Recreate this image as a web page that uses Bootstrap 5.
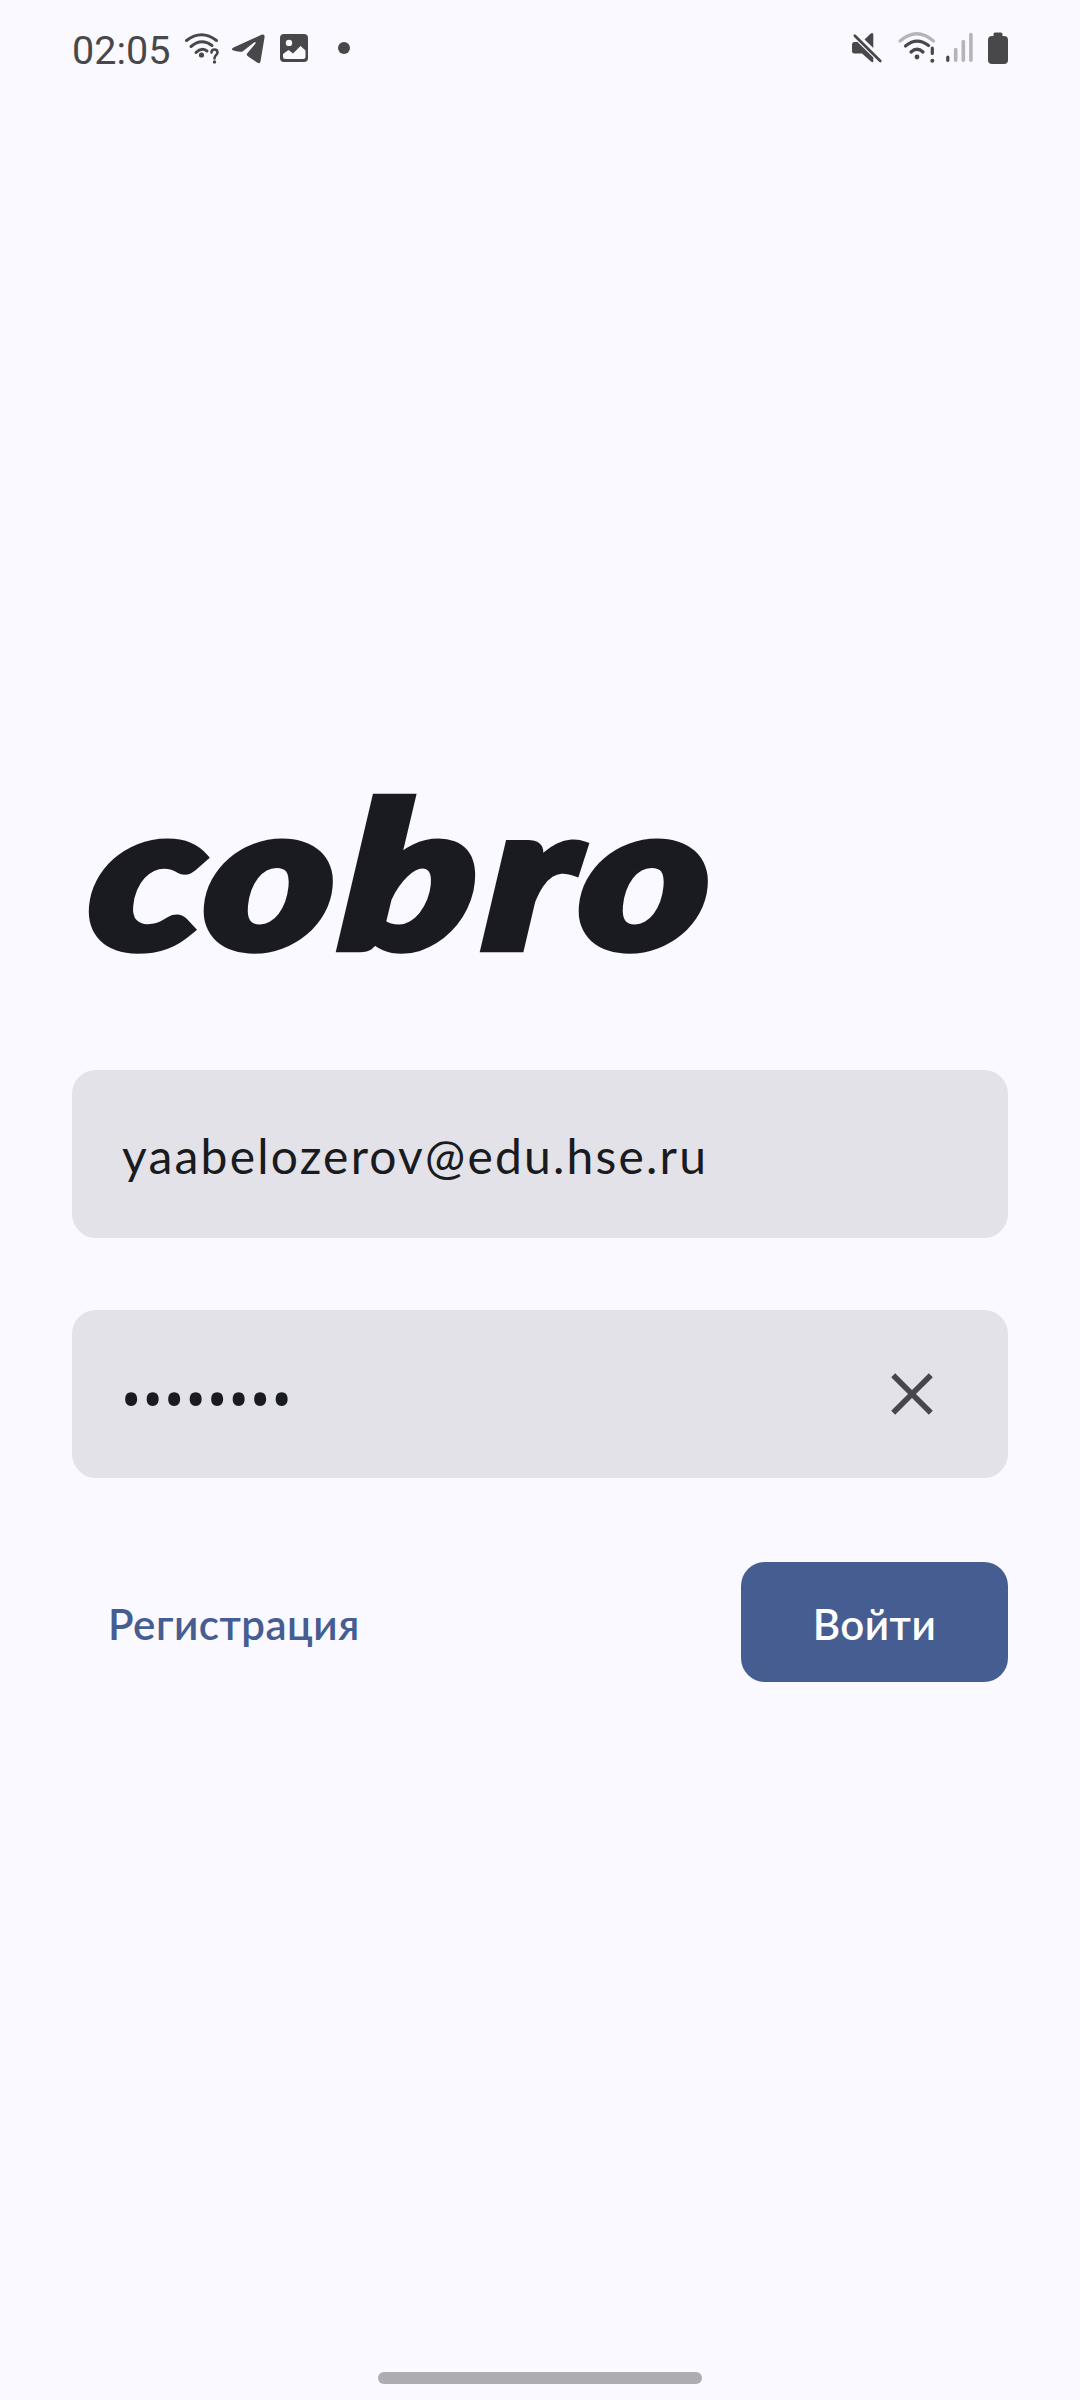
<!DOCTYPE html>
<html lang="ru">
<head>
<meta charset="utf-8">
<meta name="viewport" content="width=device-width, initial-scale=1">
<title>cobro</title>
<link href="https://cdn.jsdelivr.net/npm/bootstrap@5.3.0/dist/css/bootstrap.min.css" rel="stylesheet">
<style>
  body { background: #faf9ff; color: #1a1b20; font-family: "Noto Sans", sans-serif; height: 2400px; overflow: hidden; }
  .status-bar { height: 100px; padding: 0 72px; color: #48484b; }
  .clock { font: 400 39.5px/60px Roboto, sans-serif; width: 108px; margin-top: 2px; }
  .login { padding: 690px 72px 0; }
  .wordmark { height: 190px; margin-bottom: 90px; }
  .wordmark svg { overflow: visible; }
  .wordmark text { font: italic 900 201px Lato, sans-serif; fill: #1a1b20; stroke: #1a1b20; stroke-width: 8.5px; }
  .field { height: 168px; border-radius: 24px; background: #e2e2e8; padding: 0 60px 0 50px; margin-bottom: 72px; }
  .field .form-control { font-family: Lato, "Noto Sans", sans-serif; font-size: 48px; line-height: 60px; letter-spacing: 2.2px; color: #1a1b20; padding: 3px 0 0; }
  .field .form-control[type=password] { font-family: "Noto Sans", sans-serif; font-size: 54px; letter-spacing: 1.2px; padding: 7px 0 0; margin-left: -1px; }
  .actions { margin-top: 84px; height: 120px; }
  .btn-plain, .btn-enter { font-family: Lato, "Noto Sans", sans-serif; font-size: 42px; font-weight: 600; letter-spacing: .5px; line-height: 60px; border: 0; border-radius: 24px; height: 120px; }
  .btn-plain { color: #465d91; padding: 3px 36px 0; }
  .btn-enter { color: #fff; background: #465d91; width: 267px; padding: 3px 0 0; }
  .home-bar { width: 324px; height: 12px; border-radius: 6px; background: #adacb1; margin-bottom: 16px; }
</style>
<script src="https://cdn.jsdelivr.net/npm/bootstrap@5.3.0/dist/js/bootstrap.bundle.min.js"></script>
</head>
<body class="d-flex flex-column">
<header class="status-bar d-flex align-items-center">
  <div class="clock">02:05</div>
  <svg width="180" height="60" viewBox="180 20 180 60" fill="none" stroke="#48484b" stroke-width="3" stroke-linecap="round">
    <path d="M186.500 40.500Q201.500 29 216.500 40.500M191 46.500Q201.500 37.500 212 45.500M196 52.500Q201.500 47 207 51"/>
    <circle cx="201.500" cy="55" r="2.600" fill="#48484b" stroke="none"/>
    <path d="M211.500 52.500C211.500 48.500 217.500 48.500 217.500 52.500C217.500 55 214.500 55 214.500 58.500" stroke-width="2.600"/>
    <circle cx="214.500" cy="62" r="1.700" fill="#48484b" stroke="none"/>
    <path d="M262 34.600Q264.800 34 264.600 37L260.500 61.500Q260 64.200 257.500 62.800L247.500 56Q246 54.600 247.500 53L255.500 43.500Q256.500 41.500 254 42.500L242.500 51.500Q240.500 52.500 233.500 50.500Q230.500 49.300 233.500 47.500Z" fill="#48484b" stroke="none"/>
    <path fill-rule="evenodd" d="M284 34H304Q308 34 308 38V58Q308 62 304 62H284Q280 62 280 58V38Q280 34 284 34ZM283 54V56.500Q283 59 285.500 59H303Q305.500 59 305.500 56.500V50.500L300.500 46L293 53.500L288.500 50ZM289 39.700A3.200 3.200 0 1 0 289 46.100A3.200 3.200 0 1 0 289 39.700Z" fill="#48484b" stroke="none"/>
    <circle cx="344" cy="48" r="6" fill="#48484b" stroke="none"/>
  </svg>
  <svg class="ms-auto" width="168" height="60" viewBox="840 20 168 60" fill="none" stroke-linecap="round">
    <g fill="#48484b">
      <path d="M864.500 39.500L870.500 33.700Q873.300 32 873.300 35V48Z"/>
      <path d="M854 42H857.500L873.300 57.500V61Q873.300 63 871 61.500L862 53.500H854.500Q852 53.500 852 51V44.500Q852 42 854 42Z"/>
      <path d="M854.800 35.800L880.300 61" stroke="#48484b" stroke-width="2.700"/>
    </g>
    <path d="M900 41Q916.800 26.500 933.500 41" stroke="#b5b4b9" stroke-width="3.200"/>
    <g stroke="#48484b" stroke-width="3.200">
      <path d="M905.500 46Q917 36.500 928.500 45.500M911 52Q917 46.500 923 52M932.300 48V53.500"/>
      <path d="M947.800 57V60.300"/>
    </g>
    <circle cx="917" cy="57" r="2.400" fill="#48484b"/>
    <circle cx="932.300" cy="60.800" r="2" fill="#48484b"/>
    <path d="M955.700 49.500V60.300M963.300 41.500V60.300M970.900 34.500V60.300" stroke="#b5b4b9" stroke-width="3.600"/>
    <path d="M993.500 34Q993.500 32.500 995 32.500H1001Q1002.500 32.500 1002.500 34V36H1004Q1008 36 1008 40V60Q1008 64 1004 64H992Q988 64 988 60V40Q988 36 992 36H993.500Z" fill="#48484b"/>
  </svg>
</header>
<main class="login flex-grow-1">
  <h1 class="wordmark d-flex">
    <svg width="660" height="190" viewBox="72 790 660 190" role="img" aria-label="cobro">
      <text transform="translate(0 948) skewX(-5) scale(1.22 1)" x="70.500 164.500 277 395 472" y="0">cobro</text>
    </svg>
  </h1>
  <form>
    <div class="field d-flex align-items-center">
      <input class="form-control border-0 bg-transparent shadow-none" type="text" value="yaabelozerov@edu.hse.ru" aria-label="E-mail">
    </div>
    <div class="field d-flex align-items-center">
      <input class="form-control border-0 bg-transparent shadow-none" type="password" value="password" aria-label="Password">
      <svg width="72" height="72" viewBox="0 0 72 72" class="flex-shrink-0" stroke="#45464f" stroke-width="5.600"><path d="M17.200 17.200L54.800 54.800M54.800 17.200L17.200 54.800"/></svg>
    </div>
    <div class="actions d-flex justify-content-between">
      <button type="button" class="btn btn-plain">Регистрация</button>
      <button type="button" class="btn btn-enter">Войти</button>
    </div>
  </form>
</main>
<div class="home-bar mx-auto"></div>
</body>
</html>
